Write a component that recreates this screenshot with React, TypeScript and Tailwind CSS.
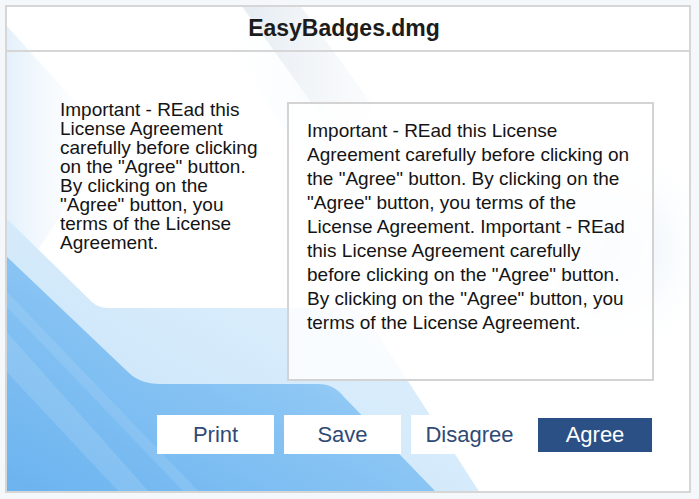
import React from "react";

// Decorative backdrop: pale streaks and the blue "shelf" swoosh at the bottom left.
function Backdrop() {
  return (
    <svg
      className="absolute inset-0"
      width={699}
      height={499}
      viewBox="0 0 699 499"
    >
      <defs>
        <clipPath id="frame">
          <rect x={5} y={5} width={686} height={488} />
        </clipPath>
        <linearGradient id="cornerFade" x1="0" y1="0" x2="1" y2="0">
          <stop offset="0" stopColor="#dcecfa" />
          <stop offset="1" stopColor="#ffffff" stopOpacity="0" />
        </linearGradient>
        <linearGradient id="streak" x1="0" y1="0" x2="1" y2="0">
          <stop offset="0" stopColor="#dde6ee" />
          <stop offset="1" stopColor="#ffffff" stopOpacity="0" />
        </linearGradient>
        <linearGradient id="streakBlue" x1="1" y1="0" x2="0" y2="0">
          <stop offset="0" stopColor="#e4f1fb" />
          <stop offset="1" stopColor="#ffffff" stopOpacity="0" />
        </linearGradient>
        <linearGradient id="pale" x1="0" y1="1" x2="1" y2="0">
          <stop offset="0" stopColor="#c4e2f9" />
          <stop offset="1" stopColor="#e6f3fd" />
        </linearGradient>
        <linearGradient id="blue" x1="0" y1="1" x2="1" y2="0">
          <stop offset="0" stopColor="#6bb3ef" />
          <stop offset="0.55" stopColor="#8cc6f4" />
          <stop offset="1" stopColor="#c2e1f9" />
        </linearGradient>
        <radialGradient id="blob" cx="0.5" cy="0.5" r="0.5">
          <stop offset="0" stopColor="#dcebf8" />
          <stop offset="1" stopColor="#ffffff" stopOpacity="0" />
        </radialGradient>
      </defs>
      <g clipPath="url(#frame)">
        <rect x={5} y={5} width={686} height={488} fill="#ffffff" />
        {/* top-left pale wedge */}
        <path d="M5 24 L110 140 L5 300 Z" fill="url(#cornerFade)" opacity={0.8} />
        {/* diagonal streak under the title */}
        <path d="M241 5 L300 5 L470 240 L410 240 Z" fill="url(#streak)" opacity={0.8} />
        <path d="M200 5 L241 5 L410 240 L360 240 Z" fill="url(#streakBlue)" opacity={0.8} />
        {/* faint glow behind the text box */}
        <ellipse cx={610} cy={250} rx={110} ry={120} fill="url(#blob)" />
        {/* pale shelf */}
        <path
          d="M5 217 L92 302 Q98 308 110 308 L345 308 Q360 308 370 322 L480 493 L5 493 Z"
          fill="url(#pale)"
        />
        {/* blue shelf */}
        <path
          d="M5 255 L128 372 Q140 384 160 384 L318 384 Q334 384 344 397 L437 493 L5 493 Z"
          fill="url(#blue)"
        />
        <path d="M5 330 L150 493 L120 493 L5 370 Z" fill="#ffffff" opacity={0.12} />
        <path d="M5 290 L200 493 L185 493 L5 305 Z" fill="#ffffff" opacity={0.1} />
      </g>
    </svg>
  );
}

const licence =
  'Important - REad this License Agreement carefully before clicking on the "Agree" button. By clicking on the "Agree" button, you terms of the License Agreement.';

// The box repeats the text twice in a row.
const licenceTwice = `${licence} ${licence}`;

function Button({ label }: { label: string }) {
  return (
    <button className="w-[117px] h-[39px] bg-white flex items-center justify-center text-[22px] leading-none text-[#2f4a75]">
      {label}
    </button>
  );
}

export default function App() {
  return (
    <div className="relative w-[699px] h-[499px] bg-[#f5f8fb] pt-[5px] pl-[5px] font-['Liberation_Sans',Arial,sans-serif] text-[#141414]">
      <Backdrop />
      <div className="relative w-[686px] h-[488px] border-2 border-[#d6d6d6] flex flex-col">
        <div className="h-[45px] border-b-2 border-[#d6d6d6] flex items-center justify-center pr-[8px] text-[23px] font-bold text-[#1c1c1c]">
          EasyBadges.dmg
        </div>

        <div className="flex items-start pl-[53px] pt-[48px]">
          <p className="w-[205px] text-[19px] leading-[19px]">{licence}</p>
          <div className="ml-[22px] mt-[2px] w-[367px] h-[279px] border-2 border-[#d3d3d3] bg-white/85 pl-[18px] pr-[17px] pt-[15px]">
            <p className="text-[19px] leading-[24px]">{licenceTwice}</p>
          </div>
        </div>

        <div className="flex items-center gap-[10px] pl-[150px] mt-[34px]">
          <Button label="Print" />
          <Button label="Save" />
          <Button label="Disagree" />
          <button className="w-[114px] h-[34px] bg-[#2b5086] flex items-center justify-center text-[22px] leading-none text-white">
            Agree
          </button>
        </div>
      </div>
    </div>
  );
}
